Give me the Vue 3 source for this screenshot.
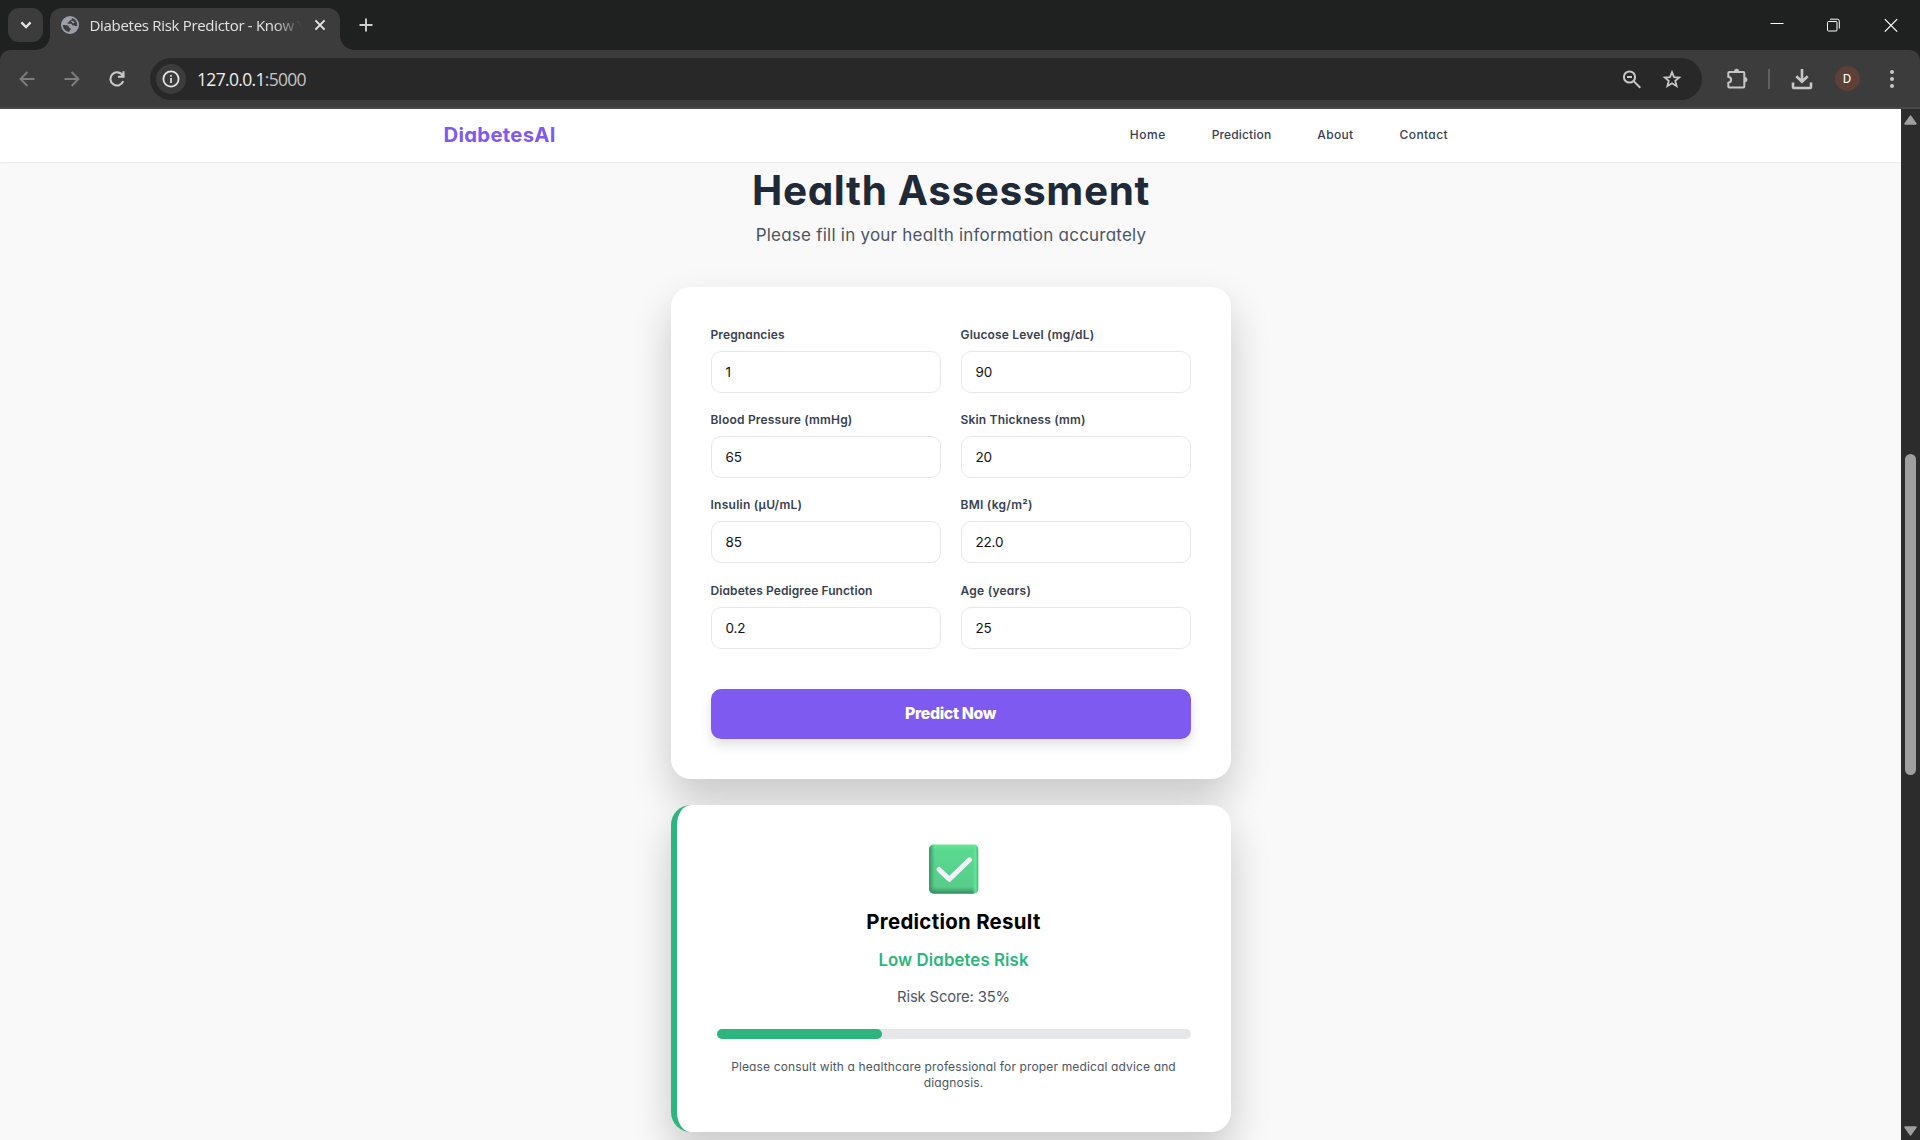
<script setup>
const links = [
  { label: 'Home', spacing: 0.5 },
  { label: 'Prediction', spacing: 0.15 },
  { label: 'About', spacing: 0.35 },
  { label: 'Contact', spacing: 0.4 }
]

const fields = [
  { label: 'Pregnancies', value: '1', spacing: 0.12 },
  { label: 'Glucose Level (mg/dL)', value: '90', spacing: 0.16 },
  { label: 'Blood Pressure (mmHg)', value: '65', spacing: 0.2 },
  { label: 'Skin Thickness (mm)', value: '20', spacing: 0.18 },
  { label: 'Insulin (μU/mL)', value: '85', spacing: 0.26 },
  { label: 'BMI (kg/m²)', value: '22.0', spacing: 0.26 },
  { label: 'Diabetes Pedigree Function', value: '0.2', spacing: 0.09 },
  { label: 'Age (years)', value: '25', spacing: 0.25 }
]

const riskScore = 35
</script>

<template>
  <div class="window">
    <header class="tabstrip">
      <div class="tab-search">
        <svg width="12" height="8" viewBox="0 0 12 8"><path d="M1.4 1.4 6 6l4.600-4.600" fill="none" stroke="#e3e3e3" stroke-width="2.300" /></svg>
      </div>
      <div class="tab">
        <svg class="globe" width="18" height="18" viewBox="0 0 18 18">
          <circle cx="9" cy="9" r="9" fill="#9aa0a9" />
          <path d="M10.800 1.900c.5 1.200-.2 2-1.400 2.300-.9.200-.7 1.300-1.500 1.700-.6.300-1.300.3-1.300 1 0 .9 1 .8 2.400.8 1.600 0 2.400.6 2.500 1.900.8.100 2.400-.1 3.500.6l1.200-.4A7.300 7.300 0 0 0 10.800 1.900z" fill="#3c3c3c" />
          <path d="M1.800 9.100c1.700.1 4.400.1 5.300.7 1 .6.700 1.800 1.700 2.100 1.100.3 1.200.8.900 1.500-.5.900-1.400.9-1.500 2.700A7.300 7.300 0 0 1 1.800 9.100z" fill="#3c3c3c" />
          <path d="M10.200 4.800c1.100.1 2.500.4 3.100 1.400.4.800-.4 1.300-1.200 1-.8-.4-2-1-1.900-2.400z" fill="#9aa0a9" />
        </svg>
        <span class="tab-title">Diabetes Risk Predictor - Know Y</span>
        <svg width="12" height="12" viewBox="0 0 12 12"><path d="M1.400 1.400l9.200 9.200M10.600 1.400l-9.200 9.200" stroke="#e8e8e8" stroke-width="1.900" /></svg>
      </div>
      <svg class="new-tab" width="14" height="14" viewBox="0 0 14 14"><path d="M7 .5v13M.5 7h13" stroke="#cfcfcf" stroke-width="1.900" /></svg>
      <div class="window-buttons">
        <svg width="14" height="14" viewBox="0 0 14 14"><path d="M.5 5.500h13" stroke="#fff" /></svg>
        <svg width="14" height="14" viewBox="0 0 14 14" fill="none" stroke="#fff"><rect x=".5" y="3.500" width="9.500" height="9.500" rx="1" /><path d="M3 1.200h7.300a2 2 0 0 1 2 2v7.300" /></svg>
        <svg width="14" height="14" viewBox="0 0 14 14"><path d="M.8 1.200l12.400 12.400M13.200 1.200.8 13.600" stroke="#fff" stroke-width="1.200" /></svg>
      </div>
    </header>

    <div class="toolbar-back">
      <div class="toolbar">
        <div class="history">
          <svg width="24" height="24" viewBox="0 0 24 24" fill="none" stroke="#7d7d7d" stroke-width="1.900"><path d="M19.500 12H5.800M12.400 5 5.500 12l6.900 7" /></svg>
          <svg width="24" height="24" viewBox="0 0 24 24" fill="none" stroke="#7d7d7d" stroke-width="1.900"><path d="M4.500 12h13.700M11.600 5l6.900 7-6.900 7" /></svg>
          <svg width="24" height="24" viewBox="0 0 24 24" fill="none" stroke="#c9c9c9" stroke-width="2.100"><path d="M18.200 14.200A6.600 6.600 0 1 1 17.600 8.400l.9 1M18.500 4.300v5.500h-5.600" /></svg>
        </div>
        <div class="omnibox">
          <div class="site-info">
            <svg width="18" height="18" viewBox="0 0 18 18"><circle cx="9" cy="9" r="7.600" fill="none" stroke="#e3e3e3" stroke-width="1.800" /><path d="M9 8v5M9 5v1.800" stroke="#e3e3e3" stroke-width="1.700" /></svg>
          </div>
          <span class="address">127.0.0.1<span class="port">:5000</span></span>
          <div class="omnibox-actions">
            <svg width="24" height="24" viewBox="0 0 24 24" fill="none" stroke="#c7c7c7" stroke-width="2"><circle cx="9.500" cy="10" r="5.600" /><path d="M13.600 14.100l6.700 6.700M7 10h5" /></svg>
            <svg width="24" height="24" viewBox="0 0 24 24" fill="none" stroke="#c7c7c7" stroke-width="1.800"><path d="M12 5.200l2 4.900 5.300.4-4 3.400 1.300 5.200-4.600-2.800-4.600 2.800 1.300-5.200-4-3.400 5.300-.4z" /></svg>
          </div>
        </div>
        <svg class="extensions" width="24" height="24" viewBox="0 0 24 24"><path d="M4.300 5h14q1 0 1 1v13.500q0 1-1 1h-14q-1 0-1-1v-3.700q2.800-.4 2.800-3t-2.800-3V6q0-1 1-1z" fill="none" stroke="#c7c7c7" stroke-width="2" /><path d="M9.200 4.500a2.400 2.400 0 0 1 4.800 0zM19.800 10.300a2.400 2.400 0 0 1 0 4.800z" fill="#c7c7c7" stroke="#c7c7c7" stroke-width=".5" /></svg>
        <i class="divider"></i>
        <svg class="download" width="24" height="24" viewBox="0 0 24 24" fill="none" stroke="#c7c7c7" stroke-width="2.600"><path d="M12 2v12M6.300 9.200l5.700 5.600 5.700-5.600M3 15.500v4.200q0 1.300 1.300 1.300h15.400q1.300 0 1.300-1.300v-4.200" /></svg>
        <span class="avatar">D</span>
        <svg class="menu" width="24" height="24" viewBox="0 0 24 24" fill="#c7c7c7"><circle cx="12" cy="5" r="2" /><circle cx="12" cy="12" r="2" /><circle cx="12" cy="19" r="2" /></svg>
      </div>
    </div>

    <div class="viewport">
      <div class="page">
        <nav class="navbar">
          <span class="brand">DiabetesAI</span>
          <div class="links">
            <a v-for="l in links" :key="l.label" :style="{ letterSpacing: l.spacing + 'px' }">{{ l.label }}</a>
          </div>
        </nav>

        <main class="main">
          <h1>Health Assessment</h1>
          <p class="subtitle">Please fill in your health information accurately</p>

          <form class="card form">
            <div class="grid">
              <div v-for="f in fields" :key="f.label" class="field">
                <label :style="{ letterSpacing: f.spacing + 'px' }">{{ f.label }}</label>
                <div class="input">{{ f.value }}</div>
              </div>
            </div>
            <button type="button">Predict Now</button>
          </form>

          <section class="card result">
            <svg class="check" width="50" height="50" viewBox="0 0 50 50">
              <defs>
                <linearGradient id="face" x1="0" y1="0" x2="0" y2="1">
                  <stop offset="0" stop-color="#66e896" /><stop offset=".12" stop-color="#5ad890" /><stop offset=".86" stop-color="#57ce8b" /><stop offset="1" stop-color="#38875f" />
                </linearGradient>
                <linearGradient id="left-edge" x1="0" y1="0" x2="1" y2="0">
                  <stop offset="0" stop-color="#348e60" stop-opacity=".9" /><stop offset=".12" stop-color="#348e60" stop-opacity="0" /><stop offset=".88" stop-color="#62e596" stop-opacity="0" /><stop offset=".95" stop-color="#62e596" /><stop offset="1" stop-color="#48b57b" />
                </linearGradient>
              </defs>
              <rect x="0" y=".4" width="49.200" height="49.400" rx="5" fill="url(#face)" />
              <rect x="0" y=".4" width="49.200" height="49.400" rx="5" fill="url(#left-edge)" />
              <path d="M10 25.500 20.300 35.300 40.500 15.800" fill="none" stroke="#f7effc" stroke-width="5" stroke-linecap="round" stroke-linejoin="round" />
            </svg>
            <h2>Prediction Result</h2>
            <p class="verdict">Low Diabetes Risk</p>
            <p class="score">Risk Score: {{ riskScore }}%</p>
            <div class="meter"><div class="meter-fill" :style="{ width: riskScore + '%' }"></div></div>
            <p class="advice">Please consult with a healthcare professional for proper medical advice and diagnosis.</p>
          </section>
        </main>
      </div>

      <div class="scrollbar">
        <svg width="13" height="10" viewBox="0 0 13 10"><path d="M6.500 1.200 11.800 8.800H1.200z" fill="#9f9f9f" stroke="#9f9f9f" stroke-width="1.800" stroke-linejoin="round" /></svg>
        <div class="thumb"></div>
        <svg class="down" width="13" height="10" viewBox="0 0 13 10"><path d="M6.500 8.800 11.800 1.200H1.200z" fill="#9f9f9f" stroke="#9f9f9f" stroke-width="1.800" stroke-linejoin="round" /></svg>
      </div>
    </div>
  </div>
</template>

<style>
body {
  overflow: hidden;
}
</style>

<style scoped>
* {
  box-sizing: border-box;
  margin: 0;
}
svg {
  display: block;
  flex: none;
}
.window {
  display: flex;
  flex-direction: column;
  width: 1920px;
  height: 1140px;
  overflow: hidden;
  background: #1f2120;
  font-family: 'Open Sans', 'Noto Sans', sans-serif;
}

/* tab strip */
.tabstrip {
  display: flex;
  height: 50px;
  padding: 8px 22px 0 8px;
}
.tab-search {
  display: flex;
  align-items: center;
  justify-content: center;
  width: 35px;
  height: 34px;
  border-radius: 11px;
  background: #3c3c3c;
}
.tab {
  position: relative;
  display: flex;
  align-items: center;
  width: 290px;
  height: 42px;
  margin-left: 7px;
  padding: 0 14px 8px 11px;
  border-radius: 12px 12px 0 0;
  background: #3c3c3c;
}
.tab::before,
.tab::after {
  content: '';
  position: absolute;
  bottom: 0;
  width: 14px;
  height: 14px;
}
.tab::before {
  left: -14px;
  background: radial-gradient(circle at 0 0, transparent 13.500px, #3c3c3c 14px);
}
.tab::after {
  right: -14px;
  background: radial-gradient(circle at 100% 0, transparent 13.500px, #3c3c3c 14px);
}
.tab-title {
  width: 212px;
  margin-left: 10.500px;
  margin-right: 12.500px;
  color: #e3e3e3;
  font-size: 15px;
  line-height: 24px;
  letter-spacing: -0.3px;
  white-space: nowrap;
  -webkit-mask-image: linear-gradient(to right, #000 184px, transparent 212px);
  mask-image: linear-gradient(to right, #000 184px, transparent 212px);
}
.new-tab {
  margin: 10px 0 0 18.500px;
}
.window-buttons {
  display: flex;
  gap: 43px;
  margin: 9.500px 0 0 auto;
}

/* toolbar */
.toolbar {
  display: flex;
  align-items: center;
  height: 59px;
  padding: 1px 15.500px 0 15px;
  border-radius: 10px 10px 0 0;
  border-bottom: 2px solid #484848;
  background: #3c3c3c;
}
.toolbar > svg,
.history,
.omnibox-actions {
  margin-top: -1px;
}
.history {
  display: flex;
  gap: 21px;
}
.omnibox {
  display: flex;
  align-items: center;
  width: 1552px;
  height: 42px;
  margin-left: 21px;
  padding: 0 18px 0 6px;
  border-radius: 21px;
  background: #282828;
}
.site-info {
  display: flex;
  align-items: center;
  justify-content: center;
  width: 30px;
  height: 30px;
  border-radius: 50%;
  background: #3c3c3c;
}
.address {
  margin-left: 11px;
  color: #eee;
  font-size: 17.500px;
  letter-spacing: -0.68px;
}
.port {
  color: #c4c4c4;
}
.omnibox-actions {
  display: flex;
  gap: 16px;
  margin-left: auto;
}
.extensions {
  margin-left: 22.500px;
}
.divider {
  width: 2px;
  height: 20px;
  margin-left: 19.500px;
  background: #606060;
}
.download {
  margin-left: 20px;
}
.avatar {
  width: 25px;
  height: 25px;
  margin: -1px 0 0 20.500px;
  border-radius: 50%;
  background: #5d4037;
  color: #fff;
  font: 13px/25px Roboto, sans-serif;
  text-align: center;
}
.menu {
  margin-left: 20.500px;
}

/* page */
.viewport {
  display: flex;
  flex: 1;
  min-height: 0;
}
.page {
  width: 1901px;
  overflow: hidden;
  background: #f9f9f9;
  font-family: Inter, sans-serif;
  font-feature-settings: 'cv11';
}
.navbar {
  position: relative;
  display: flex;
  align-items: center;
  justify-content: space-between;
  height: 53px;
  padding: 0 453px 1px 443.500px;
  background: #fff;
  box-shadow: 0 1px 2px rgba(0, 0, 0, 0.07);
}
.brand {
  color: #7f5af0;
  font-size: 20.300px;
  font-weight: 700;
  line-height: 24px;
  letter-spacing: 0.3px;
}
.links {
  display: flex;
  gap: 46px;
  color: #374151;
  font-size: 12px;
  font-weight: 500;
  line-height: 16px;
}
.main {
  width: 560px;
  margin: 0 auto;
  padding-top: 5px;
}
h1 {
  padding-left: 1px;
  color: #1f2937;
  font-size: 40.500px;
  font-weight: 700;
  line-height: 47px;
  letter-spacing: 0.650px;
  text-align: center;
}
.subtitle {
  margin-top: 9px;
  padding-left: 1px;
  color: #4b5563;
  font-size: 17px;
  line-height: 25px;
  letter-spacing: 0.23px;
  text-align: center;
}
.card {
  border-radius: 20px;
  background: #fff;
  box-shadow: 0 20px 40px rgba(0, 0, 0, 0.2);
}
.form {
  margin-top: 39px;
  padding: 40px;
}
.grid {
  display: grid;
  grid-template-columns: 230px 230px;
  gap: 19.200px 20px;
}
label {
  display: block;
  color: #374151;
  font-size: 12px;
  font-weight: 600;
  line-height: 16px;
  white-space: nowrap;
}
.input {
  height: 42px;
  margin-top: 8px;
  padding: 0 14px;
  border: 1px solid #e5e7eb;
  border-radius: 10px;
  color: #111;
  font-size: 13.500px;
  line-height: 40px;
  letter-spacing: -0.2px;
}
button {
  display: block;
  width: 100%;
  height: 50px;
  margin-top: 40.400px;
  padding: 0;
  border: 0;
  border-radius: 10px;
  background: #7f5af0;
  box-shadow: 0 6px 12px rgba(0, 0, 0, 0.12);
  color: #fff;
  font: 800 15.800px/48px Inter, sans-serif;
  letter-spacing: -0.350px;
}
.result {
  display: flex;
  flex-direction: column;
  height: 327px;
  margin-top: 26px;
  padding: 39px 40px 0;
  border-left: 6px solid #2cb67d;
  text-align: center;
}
.check {
  align-self: center;
}
h2 {
  margin-top: 16px;
  color: #000;
  font-size: 20.400px;
  font-weight: 700;
  line-height: 24px;
  letter-spacing: 0.3px;
}
.verdict {
  margin-top: 16px;
  color: #2cb67d;
  font-size: 16.800px;
  font-weight: 600;
  line-height: 20px;
  letter-spacing: 0.1px;
}
.score {
  margin-top: 17.500px;
  color: #4b5563;
  font-size: 14.800px;
  line-height: 20px;
  letter-spacing: -0.15px;
}
.meter {
  height: 10px;
  margin-top: 21.500px;
  border-radius: 5px;
  background: #e5e7eb;
}
.meter-fill {
  height: 10px;
  border-radius: 5px;
  background: #2cb67d;
}
.advice {
  margin-top: 19.600px;
  color: #4b5563;
  font-size: 12px;
  line-height: 16px;
  letter-spacing: 0.14px;
}

/* scrollbar */
.scrollbar {
  display: flex;
  flex-direction: column;
  align-items: center;
  width: 19px;
  padding: 6px 0 4px;
  background: #2c2c2c;
}
.thumb {
  width: 11px;
  height: 321px;
  margin-top: 329px;
  border-radius: 6px;
  background: #9f9f9f;
}
.down {
  margin-top: auto;
}
</style>
